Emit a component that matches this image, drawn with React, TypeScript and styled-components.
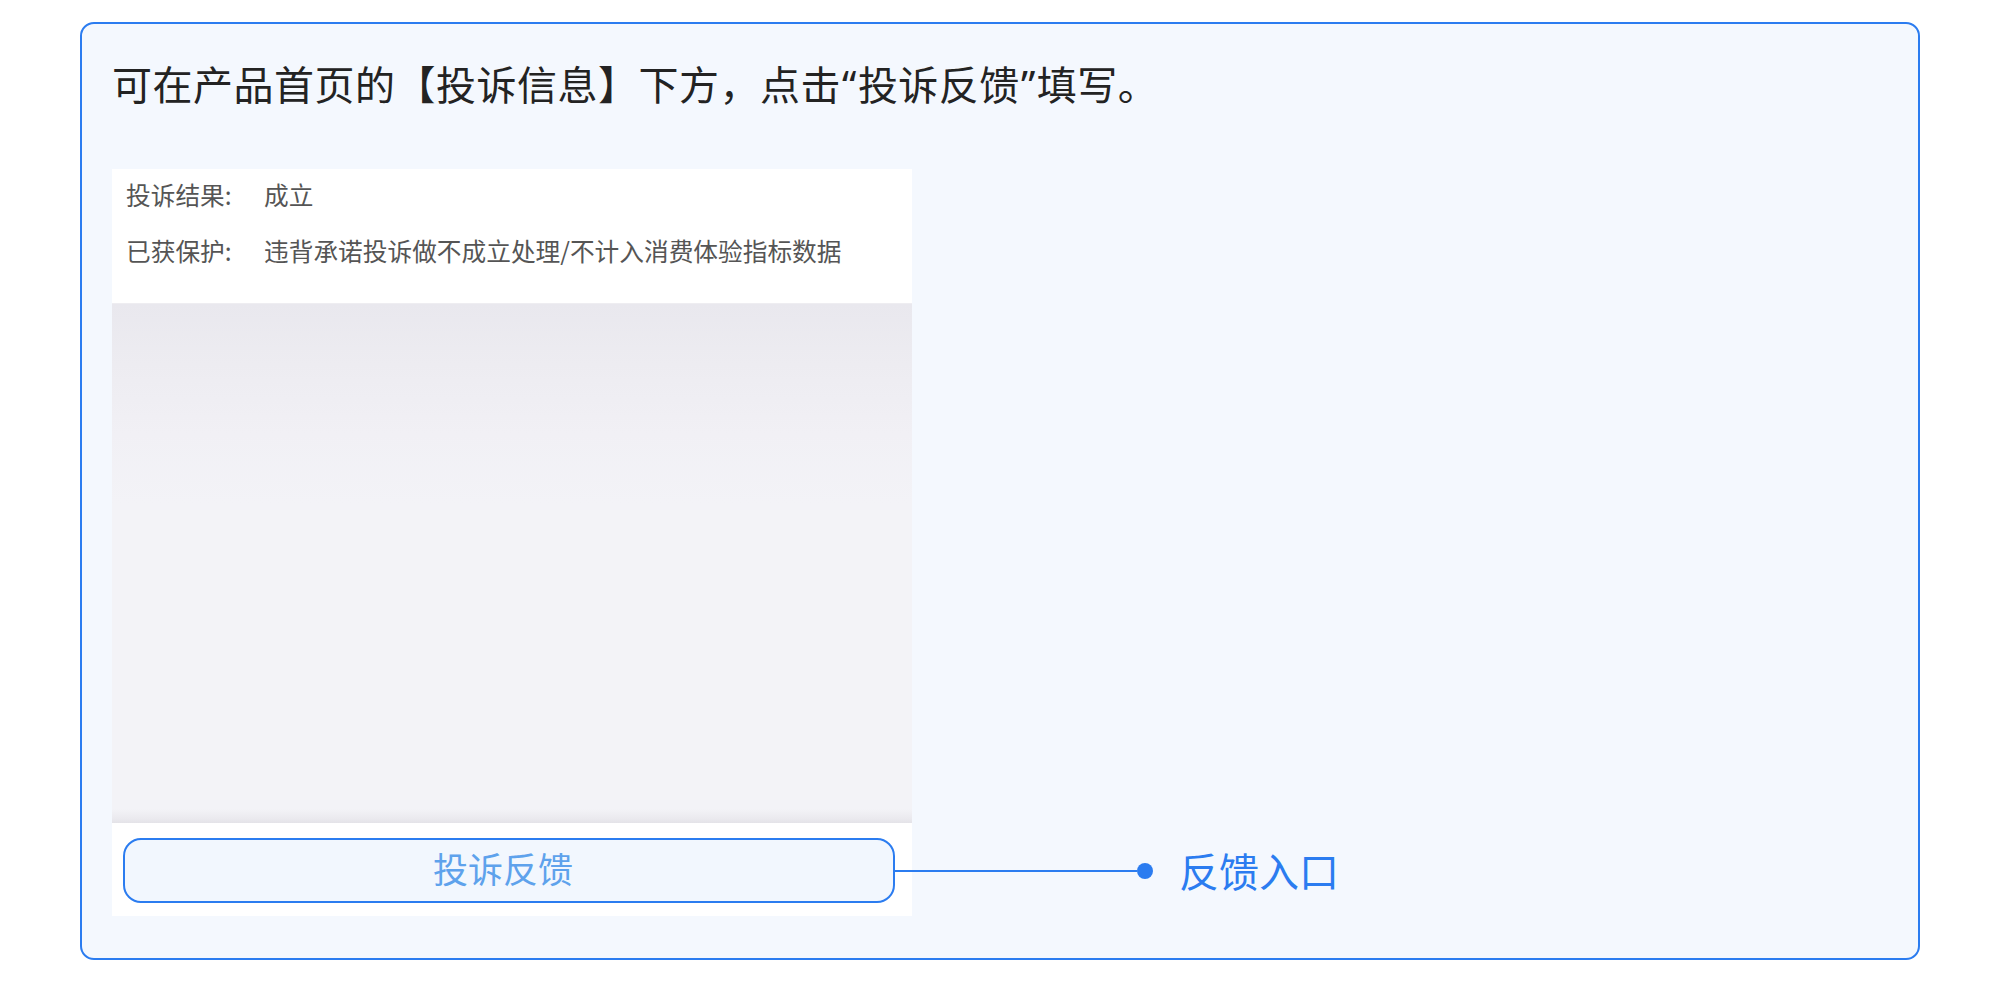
import React from "react";
import styled, { createGlobalStyle } from "styled-components";

const GlobalStyle = createGlobalStyle`
  html, body {
    margin: 0;
    padding: 0;
    background: #ffffff;
    font-family: "Noto Sans CJK SC", "Noto Sans", sans-serif;
  }
`;

const Page = styled.div`
  padding: 22px 80px 0 80px;
`;

const Panel = styled.section`
  box-sizing: border-box;
  width: 1840px;
  height: 938px;
  border: 2px solid #2b7cf0;
  border-radius: 14px;
  background: #f4f8fe;
  padding: 31px 30px 0 30px;
  display: flex;
  flex-direction: column;
  gap: 56px;
`;

const Title = styled.h1`
  margin: 0;
  font-size: 40px;
  line-height: 56px;
  font-weight: 400;
  color: #232323;
  letter-spacing: 0.5px;
`;

const Quote = styled.span`
  font-family: "Noto Sans", "Liberation Sans", sans-serif;
  margin: 0 1px;
`;

const Shot = styled.div`
  width: 800px;
  background: #ffffff;
  display: flex;
  flex-direction: column;
`;

const InfoList = styled.div`
  display: flex;
  flex-direction: column;
  gap: 24px;
  padding: 9px 14px 37px 14px;
`;

const InfoRow = styled.div`
  display: grid;
  grid-template-columns: 138px 1fr;
  font-size: 24.7px;
  line-height: 32px;
  color: #555555;
`;

const Fade = styled.div`
  height: 519px;
  border-top: 1px solid #eeedf1;
  background: linear-gradient(
    180deg,
    #e9e8ee 0%,
    #edecf1 60px,
    #f1f0f5 130px,
    #f3f3f7 200px,
    #f3f3f7 calc(100% - 14px),
    #eae9ee calc(100% - 4px),
    #e4e3e8 100%
  );
`;

const Footer = styled.div`
  padding: 15px 17px 13px 11px;
`;

const FeedbackButton = styled.div`
  position: relative;
  box-sizing: border-box;
  height: 65px;
  border: 2px solid #2b7cf0;
  border-radius: 18px;
  background: #f2f7fe;
  display: flex;
  align-items: center;
  justify-content: center;
  font-size: 35px;
  color: #5ea2ec;
  padding: 0 12px 6px 0;
`;

const Callout = styled.div`
  position: absolute;
  left: 100%;
  top: 50%;
  transform: translateY(-50%);
  display: flex;
  align-items: center;
  margin-left: 2px;
`;

const Wire = styled.span`
  display: block;
  width: 242px;
  height: 2px;
  background: #2b7cf0;
`;

const Dot = styled.span`
  display: block;
  width: 16px;
  height: 16px;
  border-radius: 50%;
  background: #2b7cf0;
`;

const CalloutLabel = styled.span`
  margin-left: 26px;
  font-size: 40px;
  line-height: 56px;
  color: #2b7cf0;
  white-space: nowrap;
  padding-bottom: 2px;
`;

export default function App() {
  return (
    <>
      <GlobalStyle />
      <Page>
        <Panel>
          <Title>
            可在产品首页的【投诉信息】下方，点击<Quote>“</Quote>投诉反馈<Quote>”</Quote>填写。
          </Title>
          <Shot>
            <InfoList>
              <InfoRow>
                <span>投诉结果:</span>
                <span>成立</span>
              </InfoRow>
              <InfoRow>
                <span>已获保护:</span>
                <span>违背承诺投诉做不成立处理/不计入消费体验指标数据</span>
              </InfoRow>
            </InfoList>
            <Fade />
            <Footer>
              <FeedbackButton>
                投诉反馈
                <Callout>
                  <Wire />
                  <Dot />
                  <CalloutLabel>反馈入口</CalloutLabel>
                </Callout>
              </FeedbackButton>
            </Footer>
          </Shot>
        </Panel>
      </Page>
    </>
  );
}
